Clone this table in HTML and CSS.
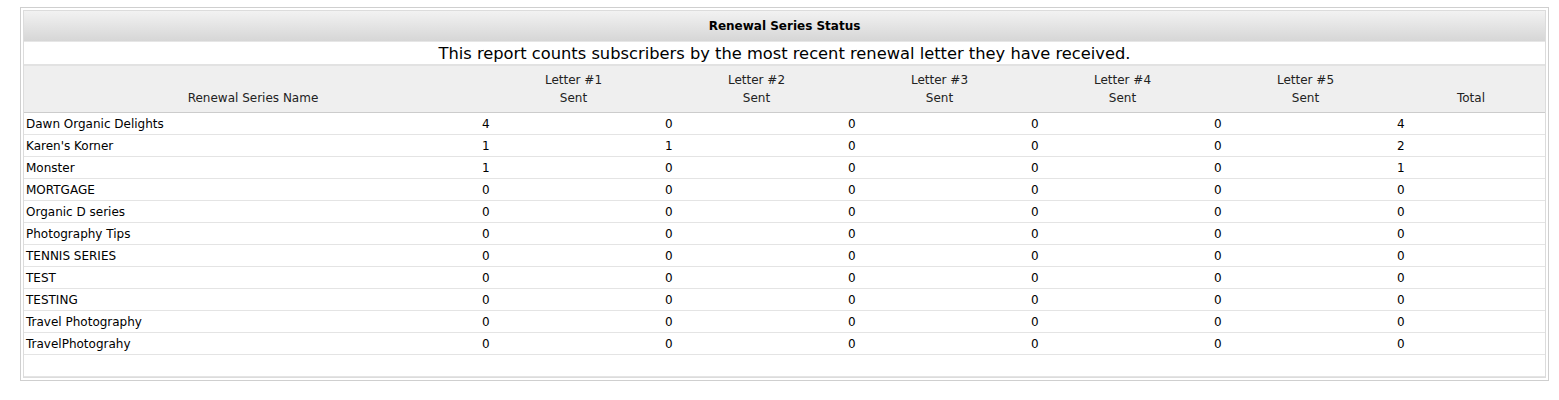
FILE: index.html
```html
<!DOCTYPE html>
<html>
<head>
<meta charset="utf-8">
<link rel="stylesheet" href="styles.css">
</head>
<body>
<div class="frame">
  <table class="report">
    <colgroup>
      <col class="c-name"><col class="c-let"><col class="c-let"><col class="c-let"><col class="c-let"><col class="c-let"><col class="c-total">
    </colgroup>
    <thead>
      <tr class="title-row"><th colspan="7">Renewal Series Status</th></tr>
      <tr class="desc-row"><td colspan="7">This report counts subscribers by the most recent renewal letter they have received.</td></tr>
      <tr class="head-row">
        <th>Renewal Series Name</th>
        <th>Letter #1<br>Sent</th>
        <th>Letter #2<br>Sent</th>
        <th>Letter #3<br>Sent</th>
        <th>Letter #4<br>Sent</th>
        <th>Letter #5<br>Sent</th>
        <th>Total</th>
      </tr>
    </thead>
    <tbody>
      <tr><td>Dawn Organic Delights</td><td>4</td><td>0</td><td>0</td><td>0</td><td>0</td><td>4</td></tr>
      <tr><td>Karen's Korner</td><td>1</td><td>1</td><td>0</td><td>0</td><td>0</td><td>2</td></tr>
      <tr><td>Monster</td><td>1</td><td>0</td><td>0</td><td>0</td><td>0</td><td>1</td></tr>
      <tr><td>MORTGAGE</td><td>0</td><td>0</td><td>0</td><td>0</td><td>0</td><td>0</td></tr>
      <tr><td>Organic D series</td><td>0</td><td>0</td><td>0</td><td>0</td><td>0</td><td>0</td></tr>
      <tr><td>Photography Tips</td><td>0</td><td>0</td><td>0</td><td>0</td><td>0</td><td>0</td></tr>
      <tr><td>TENNIS SERIES</td><td>0</td><td>0</td><td>0</td><td>0</td><td>0</td><td>0</td></tr>
      <tr><td>TEST</td><td>0</td><td>0</td><td>0</td><td>0</td><td>0</td><td>0</td></tr>
      <tr><td>TESTING</td><td>0</td><td>0</td><td>0</td><td>0</td><td>0</td><td>0</td></tr>
      <tr><td>Travel Photography</td><td>0</td><td>0</td><td>0</td><td>0</td><td>0</td><td>0</td></tr>
      <tr><td>TravelPhotograhy</td><td>0</td><td>0</td><td>0</td><td>0</td><td>0</td><td>0</td></tr>
      <tr class="empty-row"><td colspan="7"></td></tr>
    </tbody>
  </table>
</div>
</body>
</html>
```
FILE: styles.css
```css
html, body {
  margin: 0;
  padding: 0;
  background: #fff;
}
body {
  font-family: "DejaVu Sans", Verdana, sans-serif;
  color: #000;
}
.frame {
  margin: 7px 0 0 20px;
  width: 1523px;
  border: 1px solid #cfcfcf;
  padding: 2px;
}
.report {
  width: 1523px;
  border: 1px solid #dcdcdc;
  border-collapse: separate;
  border-spacing: 0;
  table-layout: fixed;
  font-size: 12px;
}
.c-name { width: 458px; }
.c-let { width: 183px; }
.c-total { width: auto; }
.report th, .report td {
  padding: 0;
}
.title-row th {
  height: 30px;
  font-weight: bold;
  font-size: 12px;
  text-align: center;
  background: linear-gradient(to bottom, #f2f2f2, #d6d6d6);
  border-bottom: 1px solid #e6e6e6;
}
.desc-row td {
  height: 22px;
  font-size: 16.3px;
  text-align: center;
  background: #fff;
  border-bottom: 2px solid #e2e2e2;
}
.head-row th {
  height: 41px;
  font-weight: normal;
  text-align: center;
  vertical-align: bottom;
  line-height: 18px;
  padding-bottom: 5px;
  background: #efefef;
  border-bottom: 1px solid #cccccc;
  color: #222;
}
.report tbody td {
  line-height: 19px;
  padding-top: 2px;
  text-align: left;
  border-bottom: 1px solid #e4e4e4;
  white-space: nowrap;
}
.report tbody td:first-child {
  padding-left: 2px;
}
.report tbody .empty-row td {
  height: 19px;
  border-bottom: 1px solid #e4e4e4;
}
```
